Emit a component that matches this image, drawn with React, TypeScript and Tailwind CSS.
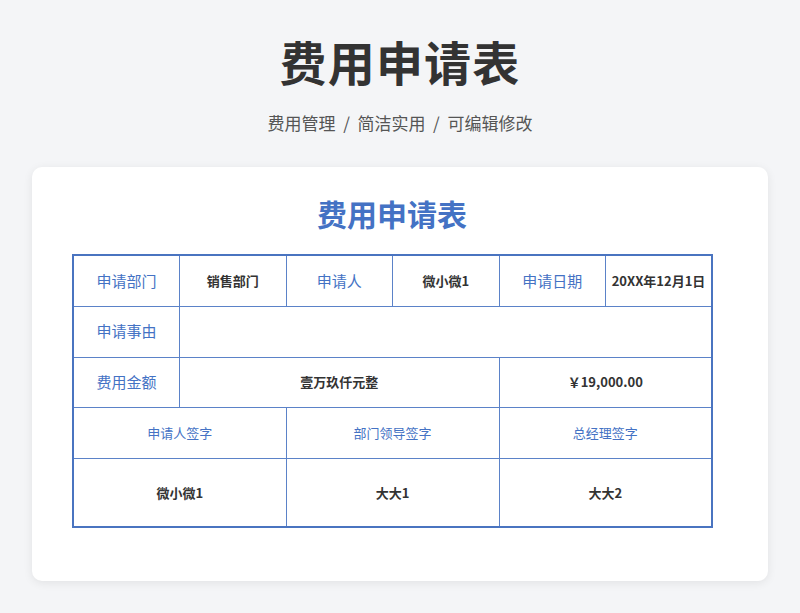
export default function App() {
  const f = { fontFamily: '"Noto Sans CJK SC", "Noto Sans", sans-serif' };
  const L = "border border-[#5b82c8] text-[#4472c4] text-[15px] text-center font-normal";
  const V = "border border-[#5b82c8] text-[#333] text-[13px] text-center font-bold";
  return (
    <div className="w-[800px] h-[613px] bg-[#f4f5f7] flex flex-col items-center" style={f}>
      <h1 className="mt-[29px] text-[47px] leading-[64px] font-bold text-[#333] tracking-wide">费用申请表</h1>
      <p className="mt-[18px] text-[17px] leading-[24px] text-[#555]">费用管理 &nbsp;/&nbsp; 简洁实用 &nbsp;/&nbsp; 可编辑修改</p>
      <div className="mt-[32px] w-[736px] h-[414px] bg-white rounded-[10px] shadow-[0_2px_10px_rgba(0,0,0,0.08)] flex flex-col">
        <h2 className="mt-[26px] text-[30px] leading-[40px] font-bold text-[#4472c4] text-center -ml-[16px]">费用申请表</h2>
        <table className="mt-[21px] ml-[40px] w-[641px] border-collapse border-2 border-[#4a74c0] table-fixed">
          <tbody>
            <tr className="h-[51px]">
              <td className={L}>申请部门</td><td className={V}>销售部门</td>
              <td className={L}>申请人</td><td className={V}>微小微1</td>
              <td className={L}>申请日期</td><td className={V}>20XX年12月1日</td>
            </tr>
            <tr className="h-[51px]">
              <td className={L}>申请事由</td><td className={V} colSpan={5}></td>
            </tr>
            <tr className="h-[50px]">
              <td className={L}>费用金额</td><td className={V} colSpan={3}>壹万玖仟元整</td>
              <td className={V} colSpan={2}>￥19,000.00</td>
            </tr>
            <tr className="h-[51px]">
              <td className={L + " !text-[13px]"} colSpan={2}>申请人签字</td>
              <td className={L + " !text-[13px]"} colSpan={2}>部门领导签字</td>
              <td className={L + " !text-[13px]"} colSpan={2}>总经理签字</td>
            </tr>
            <tr className="h-[69px]">
              <td className={V} colSpan={2}>微小微1</td>
              <td className={V} colSpan={2}>大大1</td>
              <td className={V} colSpan={2}>大大2</td>
            </tr>
          </tbody>
        </table>
      </div>
    </div>
  );
}
